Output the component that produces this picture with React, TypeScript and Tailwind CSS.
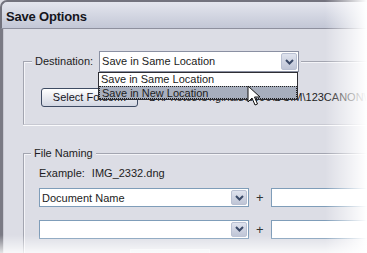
import React from 'react';

const Chevron = () => (
  <svg width="9" height="6" viewBox="0 0 9 6" className="block">
    <path d="M1 1 L4.5 4.5 L8 1" fill="none" stroke="#3b4a68" strokeWidth="2" />
  </svg>
);

const DropButton = ({ h }: { h: string }) => (
  <div className={`${h} w-[16px] mr-[1px] shrink-0 flex items-center justify-center rounded-[2px] border border-[#b9c0d2] bg-gradient-to-b from-[#dfe3ee] to-[#bfc5d6]`}>
    <Chevron />
  </div>
);

const Cursor = () => (
  <svg width="14" height="22" viewBox="0 0 14 22">
    <path d="M1 1 L1 17 L5 13 L8 20 L10.5 19 L7.5 12 L13 12 Z" fill="#fff" stroke="#111" strokeWidth="1" strokeLinejoin="round" />
  </svg>
);

export default function App() {
  return (
    <div className="relative w-[367px] h-[253px] overflow-hidden bg-white font-['Liberation_Sans',Arial,sans-serif] text-[11px] text-[#1c1c22]">
      <div className="flex flex-col h-full bg-[#dcdde5]">
        {/* title bar */}
        <div className="h-[29px] shrink-0 rounded-tl-[7px] border-t-2 border-l-2 border-b border-t-[#73737e] border-l-[#73737e] border-b-[#8e909e] bg-gradient-to-b from-[#e4e6ee] to-[#c3c7d6] pl-[4px] pt-[3px] flex items-center">
          <span className="text-[13px] font-bold text-[#15151c] tracking-[-0.2px]">Save Options</span>
        </div>

        {/* client */}
        <div className="flex-1 border-l-[3px] border-[#7a7a84] shadow-[inset_1px_0_0_#c9c9d2]">
          {/* Destination group */}
          <div className="ml-[20px] mt-[32px] h-[64px] border-t border-l border-[#a3a5b0] shadow-[inset_1px_1px_0_#f4f4f8,0_1px_0_#fafafc] border-b border-b-[#c8c9d2]">
            <div className="-mt-[11px] pl-[8px] flex">
              <div className="flex items-center gap-[6px] bg-[#dcdde5] px-[3px] pr-[2px]">
                <span>Destination:</span>
                <div className="w-[200px] h-[21px] flex items-center justify-between bg-white border border-[#8a90a2]">
                  <span className="pl-[2px]">Save in Same Location</span>
                  <DropButton h="h-[17px]" />
                </div>
              </div>
            </div>
            <div className="mt-[16px] ml-[17px] flex items-center gap-[11px]">
              <div className="w-[97px] h-[19px] shrink-0 rounded-[3px] border border-[#3e4b63] bg-gradient-to-b from-white to-[#d2d6e2] flex items-center justify-center text-[#15151c]">
                Select Folder...
              </div>
              <span className="whitespace-nowrap">D:\Photos\Originals\2006\DCIM\123CANON\</span>
            </div>
          </div>

          {/* File Naming group */}
          <div className="ml-[20px] mt-[28px] h-[120px] border-t border-l border-[#a3a5b0] shadow-[inset_1px_1px_0_#f4f4f8]">
            <div className="-mt-[8px] pl-[7px] flex">
              <span className="bg-[#dcdde5] px-[3px] leading-[14px]">File Naming</span>
            </div>
            <div className="mt-[6px] pl-[15px] flex gap-[7px] leading-[14px]">
              <span>Example:</span>
              <span>IMG_2332.dng</span>
            </div>
            <div className="mt-[8px] pl-[15px] flex flex-col gap-[12px]">
              {['Document Name', ''].map((v, i) => (
                <div key={i} className="flex items-center">
                  <div className="w-[210px] h-[19px] shrink-0 flex items-center justify-between bg-white border border-[#7f9db9]">
                    <span className="pl-[2px]">{v}</span>
                    <DropButton h="h-[15px]" />
                  </div>
                  <span className="ml-[7px] shrink-0 text-[13px] text-[#333]">+</span>
                  <div className="ml-[7px] w-[120px] h-[19px] shrink-0 bg-white border border-[#7f9db9]" />
                </div>
              ))}
            </div>
            <div className="mt-[10px] ml-[106px] w-[80px] h-[10px] border border-[#eef0f4] bg-[#e6e7ec]" />
          </div>
        </div>
      </div>

      {/* open dropdown list */}
      <div className="absolute left-[98px] top-[72px] w-[200px] h-[28px] border border-[#2e2e34] bg-white flex flex-col">
        <div className="h-[13px] leading-[13px] pl-[2px]">Save in Same Location</div>
        <div className="h-[13px] leading-[12px] pl-[2px] bg-[#a7aebd] border border-dotted border-[#222]">Save in New Location</div>
      </div>

      <div className="absolute left-[247px] top-[85px]">
        <Cursor />
      </div>

      {/* photo vignette */}
      <div className="absolute right-0 top-0 h-full w-[42px] bg-gradient-to-r from-transparent to-white" />
      <div className="absolute left-0 bottom-0 w-full h-[18px] bg-gradient-to-b from-transparent to-white/80" />
    </div>
  );
}
